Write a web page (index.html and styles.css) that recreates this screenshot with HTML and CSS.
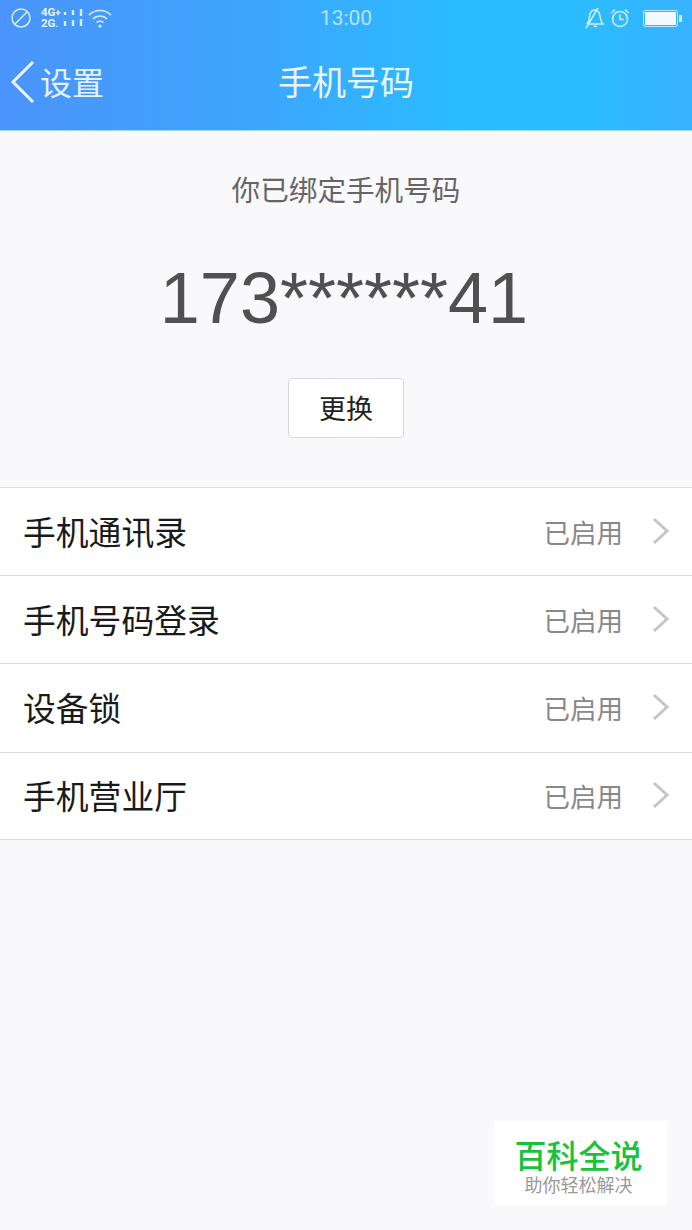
FILE: index.html
```html
<!doctype html>
<html>
<head>
<meta charset="utf-8">
<link rel="stylesheet" href="styles.css">
<title>手机号码</title>
</head>
<body>
<div class="page">
  <header class="top">
    <div class="status">
      <div class="status-left">
        <svg class="ic-block" width="22" height="22" viewBox="0 0 22 22"><circle cx="11" cy="11" r="9"/><path d="M5 17L17 5"/></svg>
        <div class="net"><span>4G<i>+</i></span><span>2G<i>.</i></span></div>
        <svg class="ic-bars" width="20" height="18" viewBox="0 0 20 18"><path d="M2 3v3M2 12v5M10 1v5M10 11v6M18 0v7M18 10v7"/></svg>
        <svg class="ic-wifi" width="24" height="20" viewBox="0 0 24 20"><path d="M1 7C7 1 17 1 23 7M5 11C9 7 15 7 19 11M8.500 14.500C10.500 13 13.500 13 15.500 14.500"/><circle cx="12" cy="18" r="1.500"/></svg>
      </div>
      <div class="clock">13:00</div>
      <div class="status-right">
        <svg class="ic-bell" width="20" height="22" viewBox="0 0 20 22"><path d="M3 17C6 14 5 10 6 7C7 4 9 3 11 3C14 3 15.500 6 16 9C16.500 12 17 15 19 17H3M10 18.500A2 2 0 0 0 13 19M2 21L14 1"/></svg>
        <svg class="ic-alarm" width="20" height="20" viewBox="0 0 20 20"><circle cx="10" cy="11" r="7.500"/><path d="M10 6.500V11.500H14M1.500 5L5 1.500M15 1.500L18.500 5"/></svg>
        <div class="battery"><div class="battery-fill"></div></div>
      </div>
    </div>
    <nav class="nav">
      <a class="back">
        <svg width="26" height="44" viewBox="0 0 26 44"><path d="M23 2L3 22L23 42"/></svg>
        <span>设置</span>
      </a>
      <h1>手机号码</h1>
    </nav>
  </header>

  <section class="bound">
    <p class="bound-label">你已绑定手机号码</p>
    <p class="bound-number">173******41</p>
    <button class="change">更换</button>
  </section>

  <ul class="list">
    <li><span class="name">手机通讯录</span><span class="state">已启用</span><svg class="arrow" width="18" height="28" viewBox="0 0 18 28"><path d="M2 2L15 14L2 26"/></svg></li>
    <li><span class="name">手机号码登录</span><span class="state">已启用</span><svg class="arrow" width="18" height="28" viewBox="0 0 18 28"><path d="M2 2L15 14L2 26"/></svg></li>
    <li><span class="name">设备锁</span><span class="state">已启用</span><svg class="arrow" width="18" height="28" viewBox="0 0 18 28"><path d="M2 2L15 14L2 26"/></svg></li>
    <li><span class="name">手机营业厅</span><span class="state">已启用</span><svg class="arrow" width="18" height="28" viewBox="0 0 18 28"><path d="M2 2L15 14L2 26"/></svg></li>
  </ul>

  <div class="mark">
    <div class="mark-title">百科全说</div>
    <div class="mark-sub">助你轻松解决</div>
  </div>
</div>
</body>
</html>
```

FILE: styles.css
```css
html, body {
    margin: 0;
    padding: 0;
}
body {
    font-family: "Noto Sans CJK SC", "Liberation Sans", sans-serif;
    background-color: #f9f9fb;
}
h1, p, ul {
    margin: 0;
    padding: 0;
}
.page {
    position: relative;
    height: 1230px;
    overflow: hidden;
}

/* header */
.top {
    height: 130px;
    background: linear-gradient(90deg, #4a94fa 0%, #3ea4fe 35%, #29bdff 68%, #2bbcff 85%, #38b2ff 100%);
    border-bottom: 1px solid #a8d8fd;
    color: #fff;
}
.status {
    height: 36px;
    padding: 0 10px 0 10px;
    display: grid;
    grid-template-columns: 1fr auto 1fr;
    align-items: center;
}
.status svg {
    fill: none;
    stroke: #d6efff;
    stroke-width: 1.5;
    display: block;
}
.status-left {
    display: flex;
    align-items: center;
}
.net {
    margin-left: 9px;
    font: bold 11.500px/10px Roboto, sans-serif;
    color: #e6f5ff;
    display: flex;
    flex-direction: column;
    width: 22px;
}
.net i {
    font-style: normal;
    font-size: 9px;
}
.status .ic-bars {
    stroke-width: 2.400;
}
.ic-wifi {
    margin-left: 5px;
}
.ic-wifi circle {
    fill: #dff3ff;
    stroke: none;
}
.clock {
    font: 21px Roboto, sans-serif;
    color: #b8e2ff;
}
.status-right {
    display: flex;
    align-items: center;
    justify-content: flex-end;
}
.ic-alarm {
    margin-left: 6px;
}
.battery {
    box-sizing: border-box;
    margin-left: 13px;
    margin-right: 4px;
    width: 35px;
    height: 17px;
    padding: 1px;
    border: 1px solid #bfe6ff;
    border-radius: 2px;
    position: relative;
}
.battery:after {
    content: "";
    position: absolute;
    right: -5px;
    top: 4px;
    width: 3px;
    height: 7px;
    background-color: #cfeaff;
}
.battery-fill {
    height: 100%;
    background-color: #f2faff;
}
.nav {
    position: relative;
    height: 94px;
    display: flex;
    align-items: center;
    justify-content: center;
}
.nav h1 {
    margin-top: -5px;
    font-size: 34px;
    font-weight: 400;
    color: #eaf6ff;
}
.back {
    position: absolute;
    left: 10px;
    top: 24px;
    display: flex;
    align-items: center;
    font-size: 32px;
    line-height: 44px;
    color: #e4f3ff;
}
.back svg {
    fill: none;
    stroke: #eaf6ff;
    stroke-width: 3;
    display: block;
}
.back span {
    margin-left: 4px;
    margin-top: -2px;
}

/* bound number */
.bound {
    height: 356px;
    display: flex;
    flex-direction: column;
    align-items: center;
    border-bottom: 1px solid #dedee0;
}
.bound-label {
    margin-top: 37px;
    font-size: 28.6px;
    line-height: 42px;
    color: #666;
}
.bound-number {
    margin: 45px 4px 0 0;
    font: 72px/86px "Liberation Sans", sans-serif;
    color: #505050;
}
.change {
    margin-top: 37px;
    width: 116px;
    height: 60px;
    padding: 0 0 2px;
    background-color: #fff;
    border: 1px solid #d9d9dc;
    border-radius: 4px;
    font-family: inherit;
    font-size: 27px;
    color: #222;
}

/* rows */
.list {
    list-style: none;
    background-color: #fff;
}
.list li {
    height: 87.200px;
    padding: 0 22px 0 23px;
    display: flex;
    align-items: center;
    border-bottom: 1px solid #dedee0;
}
.list li:last-child {
    height: 86.400px;
}
.name {
    flex: 1;
    margin-top: -3px;
    font-size: 32.800px;
    color: #1a1a1a;
}
.state {
    margin-top: -1px;
    font-size: 26.500px;
    color: #888;
}
.arrow {
    margin: -2px 0 0 29px;
    fill: none;
    stroke: #c6c6c8;
    stroke-width: 3;
}

/* watermark */
.mark {
    box-sizing: border-box;
    position: absolute;
    left: 494px;
    top: 1121px;
    width: 173px;
    height: 84px;
    padding-right: 4px;
    background-color: #fff;
    text-align: center;
}
.mark-title {
    margin-top: 15px;
    font-size: 32px;
    line-height: 36px;
    font-weight: 500;
    color: #19c23c;
}
.mark-sub {
    font-size: 18px;
    line-height: 24px;
    color: #999;
}
```
